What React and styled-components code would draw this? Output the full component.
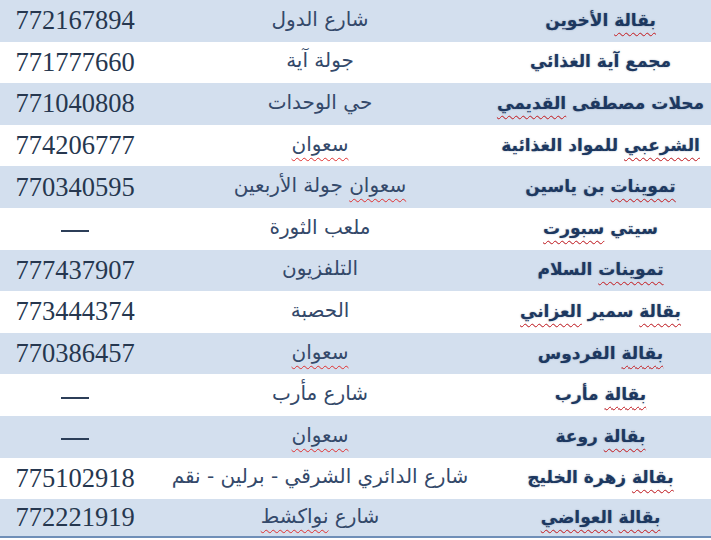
import React from 'react'
import styled, { createGlobalStyle } from 'styled-components'

const GlobalStyle = createGlobalStyle`
  html, body {
    margin: 0;
    padding: 0;
    background: #ffffff;
  }
`

// كل صف: الاسم، العنوان، الرقم — الكلمات التي عليها خط أحمر محددة بـ *
const shops = [
  { name: ['*بقالة', ' الأخوين'], address: ['شارع الدول'], phone: '772167894' },
  { name: ['مجمع آية الغذائي'], address: ['جولة آية'], phone: '771777660' },
  { name: ['محلات مصطفى ', '*القديمي'], address: ['حي الوحدات'], phone: '771040808' },
  { name: ['*الشرعبي', ' للمواد الغذائية'], address: ['*سعوان'], phone: '774206777' },
  { name: ['*تموينات', ' بن ياسين'], address: ['*سعوان', ' جولة الأربعين'], phone: '770340595' },
  { name: ['سيتي ', '*سبورت'], address: ['ملعب الثورة'], phone: null },
  { name: ['*تموينات', ' السلام'], address: ['التلفزيون'], phone: '777437907' },
  { name: ['*بقالة', ' سمير ', '*العزاني'], address: ['الحصبة'], phone: '773444374' },
  { name: ['*بقالة', ' الفردوس'], address: ['*سعوان'], phone: '770386457' },
  { name: ['*بقالة', ' مأرب'], address: ['شارع مأرب'], phone: null },
  { name: ['*بقالة', ' روعة'], address: ['*سعوان'], phone: null },
  { name: ['*بقالة', ' زهرة الخليج'], address: ['شارع الدائري الشرقي - برلين - نقم'], phone: '775102918' },
  { name: ['*بقالة', ' ', '*العواضي'], address: ['شارع ', '*نواكشط'], phone: '772221919' },
]

const Table = styled.div`
  width: 711px;
  height: 540px;
  overflow: hidden;
  direction: rtl;
  display: flex;
  flex-direction: column;
`

const Row = styled.div`
  display: grid;
  grid-template-columns: 221px 340px 150px;
  height: 41.6px;
  flex-shrink: 0;
  background: ${p => (p.$shaded ? '#d3dfee' : '#ffffff')};

  &:last-child {
    height: 37px;
    border-bottom: 2px solid #6f8fb8;
  }
`

const Cell = styled.div`
  display: flex;
  align-items: center;
  justify-content: center;
  white-space: nowrap;
`

const Name = styled(Cell)`
  font-family: "DejaVu Sans", "Liberation Sans", sans-serif;
  font-weight: bold;
  font-size: 17px;
  color: #1d3860;
  text-shadow: 0 0 1.5px rgba(31, 59, 99, 0.5);
  padding-bottom: 2px;
`

const Address = styled(Cell)`
  font-family: "DejaVu Sans", "Liberation Sans", sans-serif;
  font-size: 20px;
  color: #34496a;
  padding-bottom: 4px;
`

const Phone = styled(Cell)`
  direction: ltr;
  font-family: "Liberation Serif", "Times New Roman", serif;
  font-size: 26.5px;
  color: #26374f;
`

const Dash = styled.span`
  display: block;
  width: 28px;
  height: 2px;
  background: #2c3e58;
  margin-top: 5px;
`

const Typo = styled.span`
  text-decoration: underline wavy #e03030;
  text-decoration-thickness: 1px;
  text-underline-offset: 6px;
  text-decoration-skip-ink: none;
`

function Words({ parts }) {
  return (
    <span>
      {parts.map((w, i) =>
        w.startsWith('*') ? <Typo key={i}>{w.slice(1)}</Typo> : <React.Fragment key={i}>{w}</React.Fragment>
      )}
    </span>
  )
}

export default function App() {
  return (
    <>
      <GlobalStyle />
      <Table>
        {shops.map((s, i) => (
          <Row key={i} $shaded={i % 2 === 0}>
            <Name><Words parts={s.name} /></Name>
            <Address><Words parts={s.address} /></Address>
            <Phone>{s.phone ? s.phone : <Dash />}</Phone>
          </Row>
        ))}
      </Table>
    </>
  )
}
